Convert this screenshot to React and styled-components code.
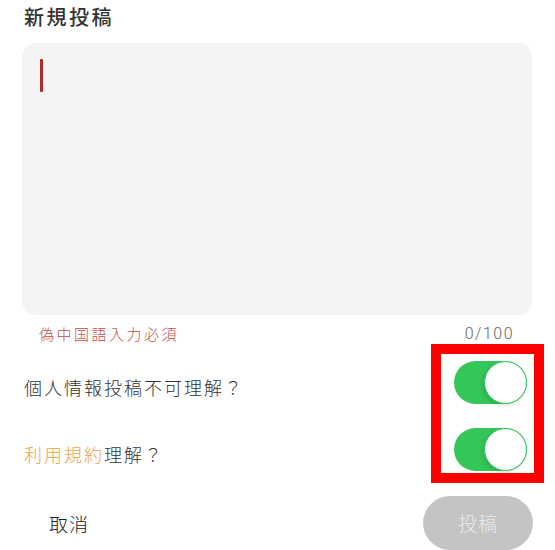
import React, { useState } from "react";
import styled, { createGlobalStyle } from "styled-components";

const GlobalStyle = createGlobalStyle`
  html, body {
    margin: 0;
    padding: 0;
    background: #fff;
    overflow: hidden;
  }
  body {
    font-family: "Noto Sans CJK JP", "Noto Sans", sans-serif;
    color: #333;
  }
`;

const Page = styled.div`
  width: 555px;
  height: 550px;
  overflow: hidden;
  display: flex;
  flex-direction: column;
`;

const Title = styled.h1`
  margin: 0;
  padding: 3px 0 0 24px;
  height: 40px;
  box-sizing: border-box;
  font-size: 20px;
  font-weight: 500;
  line-height: 28px;
  letter-spacing: 2.5px;
  color: #333;
`;

const InputBox = styled.div`
  margin: 3px 23px 0 22px;
  height: 273px;
  background: #f4f4f4;
  border-radius: 14px;
  padding: 16px 18px;
  box-sizing: border-box;
`;

const Caret = styled.span`
  display: block;
  width: 3px;
  height: 33px;
  background: #b3282a;
  border-radius: 1px;
`;

const MetaRow = styled.div`
  display: flex;
  justify-content: space-between;
  align-items: center;
  height: 20px;
  margin-top: 9px;
  padding: 0 41px 0 39px;
  font-size: 15px;
  font-weight: 300;
  line-height: 20px;
  letter-spacing: 2.5px;
`;

const Hint = styled.span`
  color: #c0504d;
`;

const Counter = styled.span`
  color: #666;
  font-family: Roboto, "Noto Sans", sans-serif;
  font-weight: 300;
  font-size: 16px;
  letter-spacing: 1.5px;
`;

const Options = styled.div`
  display: flex;
  justify-content: space-between;
  padding: 0 11px 0 24px;
`;

const Labels = styled.div`
  display: flex;
  flex-direction: column;
  gap: 24px;
  padding-top: 19px;
`;

const Label = styled.div`
  height: 43px;
  display: flex;
  align-items: center;
  font-size: 18px;
  font-weight: 300;
  letter-spacing: 2px;
  color: #333;
  padding-top: 4px;
  box-sizing: border-box;
`;

const Link = styled.span`
  color: #f0a24c;
`;

const Highlight = styled.div`
  border: 10px solid #ff0000;
  padding: 7px 7px 2px 13px;
  display: flex;
  flex-direction: column;
  gap: 24px;
`;

const Track = styled.button`
  position: relative;
  width: 73px;
  height: 43px;
  border: none;
  padding: 0;
  border-radius: 22px;
  background: ${(p) => (p.on ? "#35c659" : "#e5e5e5")};
  cursor: pointer;
`;

const Knob = styled.span`
  position: absolute;
  top: 0;
  left: ${(p) => (p.on ? "30px" : "0")};
  width: 43px;
  height: 43px;
  box-sizing: border-box;
  border-radius: 50%;
  background: #fff;
  border: 1.5px solid ${(p) => (p.on ? "#35c659" : "#e5e5e5")};
  box-shadow: -2px 2px 4px rgba(0, 0, 0, 0.12);
`;

const Footer = styled.div`
  display: flex;
  justify-content: space-between;
  align-items: center;
  margin-top: 13px;
  padding: 0 22px 0 49px;
`;

const CancelButton = styled.button`
  border: none;
  background: none;
  padding: 0;
  font-family: inherit;
  font-size: 19px;
  font-weight: 300;
  letter-spacing: 1px;
  color: #222;
`;

const SubmitButton = styled.button`
  width: 110px;
  height: 54px;
  border: none;
  border-radius: 27px;
  background: #c4c4c4;
  color: #ececec;
  font-family: inherit;
  font-size: 19px;
  font-weight: 300;
  letter-spacing: 1px;
  padding: 0 0 2px;
`;

function Toggle({ on, onChange }) {
  return (
    <Track on={on ? 1 : 0} onClick={onChange}>
      <Knob on={on ? 1 : 0} />
    </Track>
  );
}

export default function App() {
  const [privacy, setPrivacy] = useState(true);
  const [terms, setTerms] = useState(true);

  return (
    <Page>
      <GlobalStyle />
      <Title>新規投稿</Title>
      <InputBox>
        <Caret />
      </InputBox>
      <MetaRow>
        <Hint>偽中国語入力必須</Hint>
        <Counter>0/100</Counter>
      </MetaRow>
      <Options>
        <Labels>
          <Label>個人情報投稿不可理解？</Label>
          <Label>
            <Link>利用規約</Link>理解？
          </Label>
        </Labels>
        <Highlight>
          <Toggle on={privacy} onChange={() => setPrivacy(!privacy)} />
          <Toggle on={terms} onChange={() => setTerms(!terms)} />
        </Highlight>
      </Options>
      <Footer>
        <CancelButton>取消</CancelButton>
        <SubmitButton disabled>投稿</SubmitButton>
      </Footer>
    </Page>
  );
}
